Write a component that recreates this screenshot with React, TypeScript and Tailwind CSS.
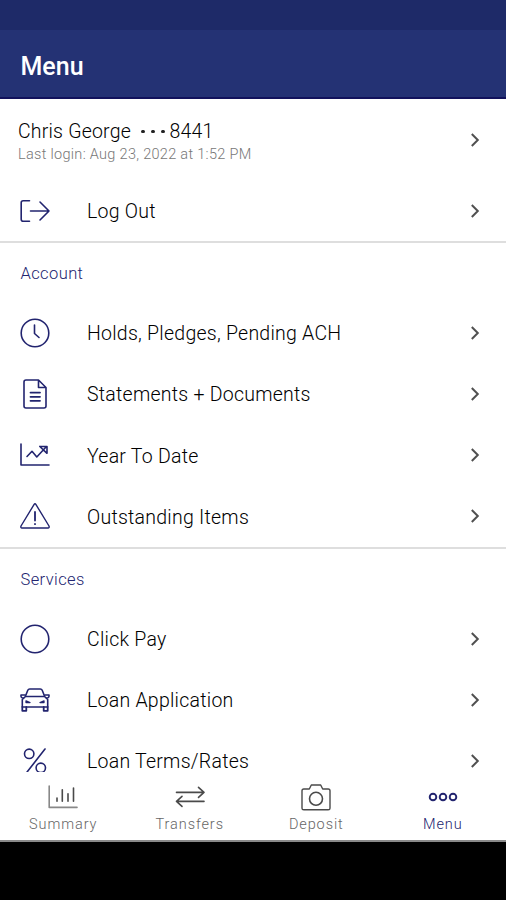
import type { ReactNode } from "react";

interface MenuItem {
  label: string;
  icon: ReactNode;
}

function Icon({ children }: { children: ReactNode }) {
  return (
    <svg
      viewBox="0 0 32 32"
      className="w-8 h-8 shrink-0"
      fill="none"
      stroke="currentColor"
      strokeWidth="1.6"
      strokeLinecap="round"
      strokeLinejoin="round"
    >
      {children}
    </svg>
  );
}

function Chevron() {
  return (
    <svg viewBox="0 0 10 16" className="w-2.5 h-4 shrink-0" fill="none" stroke="#505050" strokeWidth="2">
      <path d="M1.8 2 L7.8 8 L1.8 14" />
    </svg>
  );
}

const logOutItem: MenuItem = {
  label: "Log Out",
  icon: (
    <Icon>
      <path d="M10.5 5.8H4.2Q2.2 5.8 2.2 7.8V24.2Q2.2 26.2 4.2 26.2H10.5" />
      <path d="M11.5 16H30M21 7L30 16L21 25" />
    </Icon>
  ),
};

const accountItems: MenuItem[] = [
  {
    label: "Holds, Pledges, Pending ACH",
    icon: (
      <Icon>
        <circle cx="16" cy="16" r="13.8" />
        <path d="M15.5 8V16.5L20 20.5" />
      </Icon>
    ),
  },
  {
    label: "Statements + Documents",
    icon: (
      <Icon>
        <path d="M19.5 2H7Q5 2 5 4V28Q5 30 7 30H25Q27 30 27 28V9.5L19.5 2V9.5H27" />
        <path d="M11.5 14.6H21M11.5 18.8H21M11.5 22.8H21" strokeWidth="1.8" />
      </Icon>
    ),
  },
  {
    label: "Year To Date",
    icon: (
      <Icon>
        <path d="M2 5V26H30" />
        <path d="M8 17.5L13 12.3L17.8 18L27 8M20.8 7.5H28V14.3L20.8 7.5" />
      </Icon>
    ),
  },
  {
    label: "Outstanding Items",
    icon: (
      <Icon>
        <path d="M15 4.6Q16 3 17 4.6L30 26Q30.6 28 29 28H3Q1.4 28 2 26Z" strokeWidth="1.4" />
        <path d="M16 12V20.5M16 24V24.2" strokeWidth="1.8" />
      </Icon>
    ),
  },
];

const serviceItems: MenuItem[] = [
  {
    label: "Click Pay",
    icon: (
      <Icon>
        <circle cx="16" cy="16" r="13.8" />
      </Icon>
    ),
  },
  {
    label: "Loan Application",
    icon: (
      <Icon>
        <path d="M6.5 12L8.8 6.2Q9.3 5 10.7 5H21.3Q22.7 5 23.2 6.2L25.5 12" />
        <path d="M6.5 12.5H25.5L28.7 15.5V23H3.3V15.5Z" />
        <path d="M6 11H2Q1.5 13.8 4.5 14M26 11H30Q30.5 13.8 27.5 14" />
        <path d="M3.3 23V26.8H7.3V23M24.7 23V26.8H28.7V23" strokeWidth="1.8" />
        <path d="M7 16.8L11 18.6H7ZM25 16.8L21 18.6H25Z" strokeWidth="1.3" />
      </Icon>
    ),
  },
  {
    label: "Loan Terms/Rates",
    icon: (
      <Icon>
        <circle cx="10.2" cy="8.8" r="4.7" />
        <circle cx="21.8" cy="22.8" r="4.7" />
        <path d="M26 4L7.3 28" />
      </Icon>
    ),
  },
];

const tabs = [
  {
    label: "Summary",
    active: false,
    icon: (
      <Icon>
        <path d="M2.2 5V26.4H30" stroke="#888" />
        <path d="M10 17V20.3M15.3 8.8V20.3M21 12.8V20.3M26.5 7V20.3" />
      </Icon>
    ),
  },
  {
    label: "Transfers",
    active: false,
    icon: (
      <Icon>
        <path d="M2.5 11.4H30M24.5 6.4L30 11.4L24.5 16.4" />
        <path d="M30 20.4H2.5M8 15.4L2.5 20.4L8 25.4" />
      </Icon>
    ),
  },
  {
    label: "Deposit",
    active: false,
    icon: (
      <Icon>
        <path d="M3.8 8H9.3L11.3 4H20.7L22.7 8H28.2Q30 8 30 9.8V27.2Q30 28.8 28.2 28.8H3.8Q2 28.8 2 27.2V9.8Q2 8 3.8 8Z" strokeWidth="1.4" />
        <circle cx="16" cy="17.8" r="6.5" />
      </Icon>
    ),
  },
  {
    label: "Menu",
    active: true,
    icon: (
      <Icon>
        <circle cx="6" cy="16" r="3.3" strokeWidth="1.9" />
        <circle cx="16" cy="16" r="3.3" strokeWidth="1.9" />
        <circle cx="26" cy="16" r="3.3" strokeWidth="1.9" />
      </Icon>
    ),
  },
];

function MenuRow({ item }: { item: MenuItem }) {
  return (
    <div className="flex items-center h-[61.2px] shrink-0 pl-[19px] pr-[26px] text-[#22246f]">
      {item.icon}
      <span className="ml-9 pt-[3px] flex-1 text-[19.5px] leading-5 font-light tracking-[0.25px] text-black whitespace-nowrap">
        {item.label}
      </span>
      <Chevron />
    </div>
  );
}

function Section({ title, items }: { title: string; items: MenuItem[] }) {
  return (
    <section className="border-t-2 border-[#dedede]">
      <h2 className="h-[59px] pl-[20.5px] pt-[21px] text-[16.5px] leading-5 font-light tracking-[0.4px] text-[#22246f]">
        {title}
      </h2>
      {items.map((item) => (
        <MenuRow key={item.label} item={item} />
      ))}
    </section>
  );
}

export default function App() {
  return (
    <div className="w-full h-[900px] flex flex-col overflow-hidden bg-white font-['Roboto',sans-serif]">
      <div className="h-[30px] shrink-0 bg-[#1e2a68]" />
      <header className="h-[69px] shrink-0 flex items-center pl-[20.5px] pt-1.5 bg-[#243274] border-b-2 border-[#12125c]">
        <h1 className="text-[25px] leading-8 font-medium text-white">Menu</h1>
      </header>

      <main className="h-[673px] shrink-0 overflow-hidden">
        <div className="h-[81px] flex items-center justify-between pl-[18px] pr-[26px]">
          <div className="pt-1.5">
            <div className="flex items-center text-[19.5px] leading-6 font-light text-black whitespace-nowrap">
              <span className="tracking-[0.2px]">Chris George</span>
              <span className="flex gap-[6.5px] ml-2.5 mr-[5px]">
                <i className="size-[3.5px] rounded-full bg-[#222]" />
                <i className="size-[3.5px] rounded-full bg-[#222]" />
                <i className="size-[3.5px] rounded-full bg-[#222]" />
              </span>
              <span className="tracking-[0.2px]">8441</span>
            </div>
            <p className="text-[14.5px] leading-[22px] font-light tracking-[0.3px] text-[#777] whitespace-nowrap">
              Last login: Aug 23, 2022 at 1:52 PM
            </p>
          </div>
          <Chevron />
        </div>
        <MenuRow item={logOutItem} />
        <Section title="Account" items={accountItems} />
        <Section title="Services" items={serviceItems} />
      </main>

      <nav className="h-[70px] shrink-0 grid grid-cols-4 border-b-2 border-[#8a8a8a] pt-[9px]">
        {tabs.map((tab) => (
          <div
            key={tab.label}
            className={`flex flex-col items-center ${tab.active ? "text-[#22246f]" : "text-[#4a4a4a]"}`}
          >
            {tab.icon}
            <span className={`text-[14.5px] leading-6 tracking-[0.9px] font-light ${tab.active ? "text-[#22246f]" : "text-[#666]"}`}>
              {tab.label}
            </span>
          </div>
        ))}
      </nav>
      <div className="flex-1 bg-black" />
    </div>
  );
}
